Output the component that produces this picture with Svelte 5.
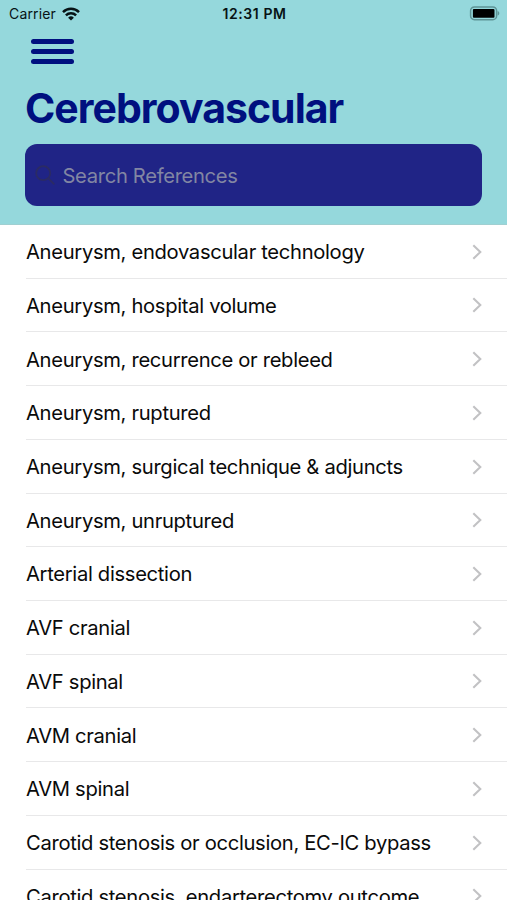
<script lang="ts">
  let query = $state('');

  const references = [
    'Aneurysm, endovascular technology',
    'Aneurysm, hospital volume',
    'Aneurysm, recurrence or rebleed',
    'Aneurysm, ruptured',
    'Aneurysm, surgical technique & adjuncts',
    'Aneurysm, unruptured',
    'Arterial dissection',
    'AVF cranial',
    'AVF spinal',
    'AVM cranial',
    'AVM spinal',
    'Carotid stenosis or occlusion, EC-IC bypass',
    'Carotid stenosis, endarterectomy outcome'
  ];

  let visible = $derived(
    references.filter((name) => name.toLowerCase().includes(query.toLowerCase()))
  );
</script>

<div class="screen">
  <header class="header">
    <div class="status">
      <div class="status__carrier">
        <span>Carrier</span>
        <svg class="status__wifi" viewBox="0 0 18 14" aria-hidden="true">
          <g fill="none" stroke="#071315" stroke-width="2.5">
            <path d="M1 5.1a11.4 11.4 0 0 1 16 0" />
            <path d="M3.9 8.3a7.3 7.3 0 0 1 10.2 0" />
          </g>
          <path d="M9 13.6 6.1 10.7a4.1 4.1 0 0 1 5.8 0z" fill="#071315" />
        </svg>
      </div>
      <time class="status__time">12:31 PM</time>
      <svg class="status__battery" viewBox="0 0 31 15" aria-hidden="true">
        <rect x="1.6" y="0.9" width="26" height="12.8" rx="3.8" fill="none" stroke="#5e9496" stroke-width="1.5" />
        <rect x="3.9" y="2.9" width="21.6" height="8.8" rx="1" fill="#000" />
        <path d="M28.6 5v4.6c1-.4 1.7-1.2 1.7-2.3S29.6 5.4 28.6 5z" fill="#5e9496" />
      </svg>
    </div>

    <button class="menu" type="button" aria-label="Menu">
      <span class="menu__bar"></span>
      <span class="menu__bar"></span>
      <span class="menu__bar"></span>
    </button>

    <h1 class="title">Cerebrovascular</h1>

    <label class="search">
      <svg class="search__icon" viewBox="0 0 20 20" aria-hidden="true">
        <circle cx="8.2" cy="8.2" r="7" />
        <path d="m13.3 13.3 5.5 5.5" />
      </svg>
      <input class="search__input" type="text" placeholder="Search References" bind:value={query} />
    </label>
  </header>

  <ul class="list">
    {#each visible as name (name)}
      <li class="row">
        <span class="row__name">{name}</span>
        <svg class="row__chevron" viewBox="0 0 10 16" aria-hidden="true">
          <path d="m1.3 1.2 7 6.8-7 6.8" />
        </svg>
      </li>
    {/each}
  </ul>
</div>

<style>
  :global(body) {
    background: #fff;
  }

  .screen {
    height: 900px;
    overflow: hidden;
    font-family: Inter, 'Liberation Sans', sans-serif;
    color: #0a0a0a;
  }

  .header {
    box-sizing: border-box;
    height: 225px;
    padding-right: 25px;
    padding-left: 25px;
    background: #95d8dc;
    border-bottom: 1px solid #a0cfd1;
  }

  .status {
    display: grid;
    grid-template-columns: 1fr auto 1fr;
    align-items: center;
    height: 27px;
    margin: 0 -18px 0 -16px;
    font-size: 14px;
    color: #071315;
  }

  .status__carrier {
    display: flex;
    align-items: center;
    gap: 6px;
    letter-spacing: 0.15px;
  }

  .status__wifi {
    width: 18px;
    height: 14px;
  }

  .status__time {
    font-weight: 600;
    letter-spacing: 0.6px;
  }

  .status__battery {
    justify-self: end;
    width: 31px;
    height: 15px;
  }

  .menu {
    display: flex;
    flex-direction: column;
    justify-content: space-between;
    width: 43px;
    height: 25px;
    margin: 12px 0 0 6.4px;
    padding: 0;
    background: none;
    border: none;
  }

  .menu__bar {
    height: 5.4px;
    background: #00107f;
    border-radius: 3px;
  }

  .title {
    margin: 19px 0 0;
    font-size: 41px;
    font-weight: 700;
    line-height: 50px;
    letter-spacing: -0.98px;
    color: #00107f;
  }

  .search {
    display: flex;
    align-items: center;
    gap: 7.5px;
    box-sizing: border-box;
    height: 62px;
    margin-top: 11px;
    padding: 0 10px;
    background: #202486;
    border-radius: 12px;
  }

  .search__icon {
    flex: none;
    width: 20px;
    height: 20px;
    fill: none;
    stroke: #2b2b64;
    stroke-width: 1.8;
    stroke-linecap: round;
  }

  .search__input {
    flex: 1;
    min-width: 0;
    padding: 0;
    font: inherit;
    font-size: 20.2px;
    letter-spacing: -0.33px;
    color: #fff;
    background: none;
    border: none;
    outline: none;
  }

  .search__input::placeholder {
    color: #8286a3;
    opacity: 1;
  }

  .list {
    margin: 0;
    padding: 0 0 0 26px;
    list-style: none;
  }

  .row {
    display: flex;
    align-items: center;
    justify-content: space-between;
    box-sizing: border-box;
    height: 53.73px;
    padding-top: 0.6px;
    padding-right: 25px;
    border-bottom: 1px solid #e8e8e9;
  }

  .row__name {
    font-size: 20.2px;
    letter-spacing: -0.32px;
    white-space: nowrap;
  }

  .row__chevron {
    flex: none;
    width: 10px;
    height: 16px;
    fill: none;
    stroke: #c2c2c4;
    stroke-width: 2.1;
  }
</style>
